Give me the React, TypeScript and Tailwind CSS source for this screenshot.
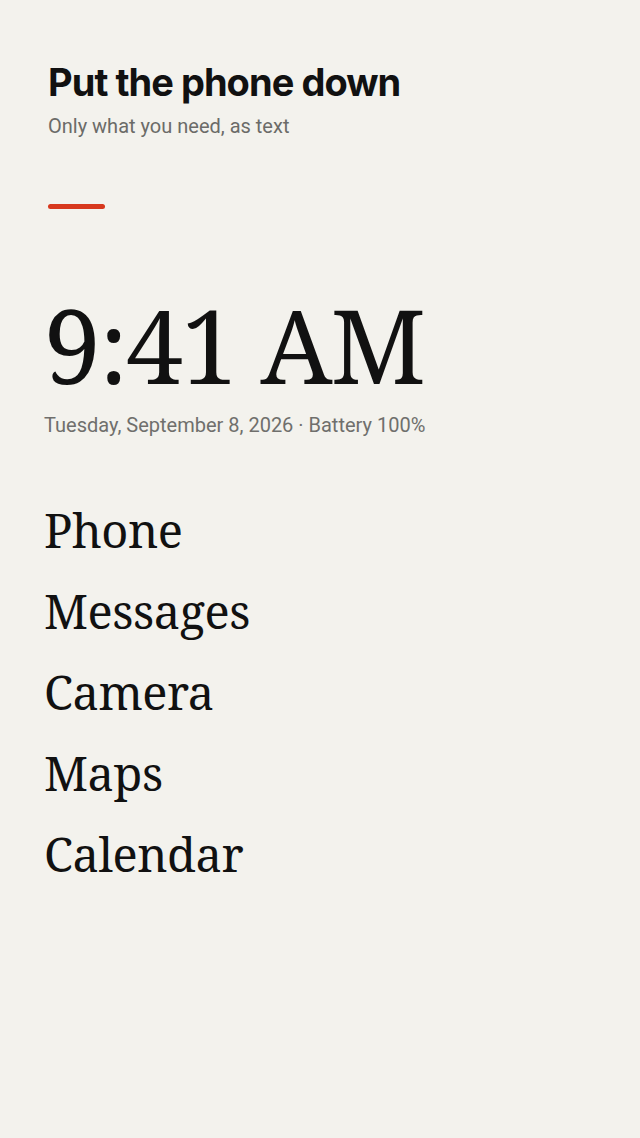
import React from 'react';

const apps = ['Phone', 'Messages', 'Camera', 'Maps', 'Calendar'];

export default function App() {
  return (
    <div className="min-h-screen w-full bg-[#f3f2ed] text-[#111111]">
      <header className="px-12 pt-[60px]">
        <h1 className="font-['Inter',sans-serif] text-[38px] font-bold leading-[44px] tracking-[-0.025em]">
          Put the phone down
        </h1>
        <p className="mt-[10px] font-['Roboto',sans-serif] text-[20px] leading-6 text-[#6b6b68]">
          Only what you need, as text
        </p>
        <div className="mt-[66px] h-[5px] w-[57px] rounded-full bg-[#d7391e]" />
      </header>

      <main className="px-11 pt-[81px]">
        <div className="font-['Noto_Serif','DejaVu_Serif',serif] text-[102px] leading-[110px] tracking-[-0.02em]">
          9:41 AM
        </div>
        <p className="mt-[13px] font-['Roboto',sans-serif] text-[20px] leading-6 text-[#6f6f6c]">
          Tuesday, September 8, 2026 · Battery 100%
        </p>

        <ul className="mt-[53px] flex flex-col">
          {apps.map((name) => (
            <li
              key={name}
              className="font-['Noto_Serif','DejaVu_Serif',serif] text-[47px] leading-[81px] tracking-[-0.01em]"
            >
              {name}
            </li>
          ))}
        </ul>
      </main>
    </div>
  );
}
